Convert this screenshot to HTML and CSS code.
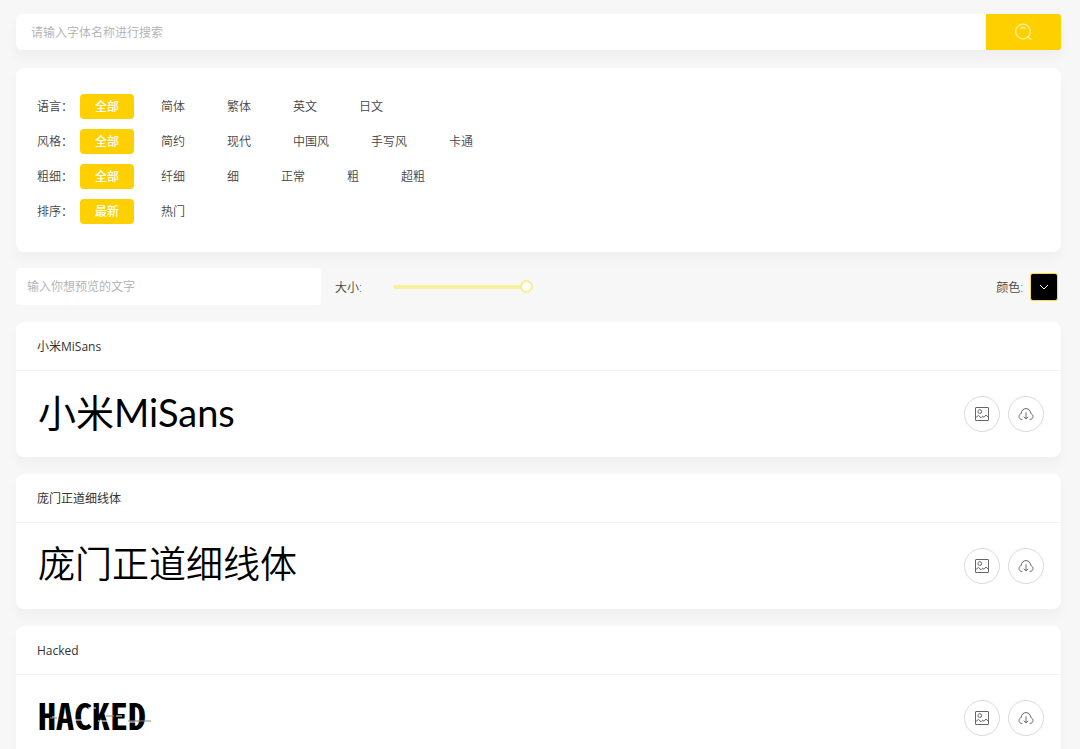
FILE: index.html
```html
<!DOCTYPE html>
<html lang="zh-CN">
<head>
  <meta charset="UTF-8">
  <meta name="viewport" content="width=device-width, initial-scale=1.0">
  <title>字体搜索</title>
  <link rel="stylesheet" href="styles.css">
</head>
<body>

<svg class="icons" aria-hidden="true">
  <symbol id="icon-image" viewBox="0 0 16 16">
    <rect x="1.5" y="1.5" width="13" height="13" rx="0.5"/>
    <circle cx="5.8" cy="5.6" r="1.9"/>
    <path d="M1.8 11.6L4.4 9.4L7 11.8L8.6 10.2L10 11.2L12 9L14.2 11.4"/>
  </symbol>
  <symbol id="icon-download" viewBox="0 0 16 16">
    <path d="M4.4 13.4H3.9C2.2 13.4 1 12.1 1 10.5C1 9.1 1.9 8 3.2 7.6C3.4 4.6 5.3 2.6 8 2.6C10.7 2.6 12.6 4.6 12.8 7.6C14.1 8 15 9.1 15 10.5C15 12.1 13.8 13.4 12.1 13.4H11.6"/>
    <path d="M8 6.4V12.8M5.8 10.8L8 13L10.2 10.8"/>
  </symbol>
</svg>

<form class="search">
  <input type="text" class="search-input" placeholder="请输入字体名称进行搜索" aria-label="搜索字体">
  <button type="button" class="search-btn" aria-label="搜索">
    <svg viewBox="0 0 20 20">
      <circle cx="10" cy="9.5" r="7.3"/>
      <path d="M7.4 6.4C9 5.2 11 5.2 12.6 6.4M14.4 14.4L16.8 16.8H18.4"/>
    </svg>
  </button>
</form>

<div class="filters">
  <div class="filter-row">
    <span class="filter-label">语言：</span>
    <a class="tag active" href="#">全部</a>
    <a class="tag" href="#">简体</a>
    <a class="tag" href="#">繁体</a>
    <a class="tag" href="#">英文</a>
    <a class="tag" href="#">日文</a>
  </div>
  <div class="filter-row">
    <span class="filter-label">风格：</span>
    <a class="tag active" href="#">全部</a>
    <a class="tag" href="#">简约</a>
    <a class="tag" href="#">现代</a>
    <a class="tag" href="#">中国风</a>
    <a class="tag" href="#">手写风</a>
    <a class="tag" href="#">卡通</a>
  </div>
  <div class="filter-row">
    <span class="filter-label">粗细：</span>
    <a class="tag active" href="#">全部</a>
    <a class="tag" href="#">纤细</a>
    <a class="tag" href="#">细</a>
    <a class="tag" href="#">正常</a>
    <a class="tag" href="#">粗</a>
    <a class="tag" href="#">超粗</a>
  </div>
  <div class="filter-row">
    <span class="filter-label">排序：</span>
    <a class="tag active" href="#">最新</a>
    <a class="tag" href="#">热门</a>
  </div>
</div>

<div class="toolbar">
  <input type="text" class="preview-input" placeholder="输入你想预览的文字" aria-label="预览文字">
  <label class="size-label" for="size">大小:</label>
  <input type="range" class="size-range" id="size" min="12" max="60" value="60">
  <label class="color-label" for="color">颜色:</label>
  <button type="button" class="color-btn" id="color">
    <svg viewBox="0 0 12 12"><path d="M2 4L6 8L10 4"/></svg>
  </button>
</div>

<div class="card">
  <div class="card-title">小米MiSans</div>
  <div class="card-body">
    <div class="sample sample-misans">小米MiSans</div>
    <button type="button" class="round-btn" aria-label="图片"><svg><use href="#icon-image"/></svg></button>
    <button type="button" class="round-btn" aria-label="下载"><svg><use href="#icon-download"/></svg></button>
  </div>
</div>

<div class="card">
  <div class="card-title">庞门正道细线体</div>
  <div class="card-body">
    <div class="sample sample-thin">庞门正道细线体</div>
    <button type="button" class="round-btn" aria-label="图片"><svg><use href="#icon-image"/></svg></button>
    <button type="button" class="round-btn" aria-label="下载"><svg><use href="#icon-download"/></svg></button>
  </div>
</div>

<div class="card">
  <div class="card-title">Hacked</div>
  <div class="card-body">
    <div class="sample sample-hacked">
      <span class="glitch">HACKED<svg class="glitch-lines" viewBox="0 0 114 26">
        <path class="cut" d="M14 15H19M36 18H44M50 6H58M60 19H74M78 14H84M88 20H98"/>
        <path class="trace" d="M12 16H19M68 14H76M90 19H113"/>
      </svg></span>
    </div>
    <button type="button" class="round-btn" aria-label="图片"><svg><use href="#icon-image"/></svg></button>
    <button type="button" class="round-btn" aria-label="下载"><svg><use href="#icon-download"/></svg></button>
  </div>
</div>

</body>
</html>
```
FILE: styles.css
```css
* {
  box-sizing: border-box;
}

body {
  margin: 0;
  padding: 14px 19px 0 16px;
  font-family: "Open Sans", "Noto Sans CJK SC", sans-serif;
  font-size: 12px;
  font-weight: 350;
  color: #444;
  background-color: #f7f7f7;
  overflow: hidden;
}

input,
button {
  font-family: inherit;
  font-size: 12px;
  font-weight: inherit;
  border: none;
  outline: none;
}

input::placeholder {
  color: #b0b0b0;
}

svg {
  fill: none;
  stroke: currentColor;
}

.icons {
  display: none;
}

/* Recherche */
.search {
  display: flex;
  height: 36px;
  margin-bottom: 18px;
  border-radius: 6px;
  background-color: #fff;
  box-shadow: 0 8px 12px rgba(40, 60, 60, 0.04);
}

.search-input {
  flex: 1;
  padding: 0 15px;
  background: transparent;
}

.search-btn {
  display: flex;
  align-items: center;
  justify-content: center;
  width: 75px;
  padding: 0 2px 0 0;
  border-radius: 0 3px 3px 0;
  color: #fff3a0;
  background-color: #ffd000;
  cursor: pointer;
}

.search-btn svg {
  width: 20px;
  height: 20px;
  stroke-width: 1.3;
}

/* Filtres */
.filters {
  display: flex;
  flex-direction: column;
  gap: 10px;
  margin-bottom: 16px;
  padding: 26px 21px 28px;
  border-radius: 8px;
  background-color: #fff;
  box-shadow: 0 8px 12px rgba(0, 0, 0, 0.03);
}

.filter-row {
  display: flex;
  gap: 12px;
  line-height: 25px;
}

.filter-label {
  width: 31px;
  white-space: nowrap;
}

.tag {
  padding: 0 15px;
  border-radius: 4px;
  color: #444;
  text-decoration: none;
}

.tag.active {
  color: #fff;
  font-weight: 500;
  background-color: #ffd000;
}

/* Barre d'outils */
.toolbar {
  display: flex;
  align-items: center;
  height: 37px;
  margin-bottom: 17px;
}

.preview-input {
  width: 305px;
  height: 37px;
  padding: 0 11px;
  border-radius: 4px;
  background-color: #fff;
}

.size-label {
  margin-left: 14px;
}

.size-range {
  appearance: none;
  width: 140px;
  height: 14px;
  margin: 0 auto 0 31px;
  background: transparent;
}

.size-range::-webkit-slider-runnable-track {
  height: 4px;
  border-radius: 2px;
  background-color: #f7f19c;
}

.size-range::-webkit-slider-thumb {
  appearance: none;
  width: 13px;
  height: 13px;
  margin-top: -5px;
  border: 2px solid #f5ef8c;
  border-radius: 50%;
  background-color: #fff;
}

.color-btn {
  display: flex;
  align-items: center;
  justify-content: center;
  width: 28px;
  height: 28px;
  margin: 0 3px 0 7px;
  padding: 0;
  border: 1px solid #ffd83c;
  border-radius: 3px;
  color: #fff;
  background-color: #000;
}

.color-btn svg {
  width: 12px;
  height: 12px;
}

/* Cartes des polices */
.card {
  margin-bottom: 17px;
  border-radius: 8px;
  background-color: #fff;
  box-shadow: 0 8px 12px rgba(20, 20, 50, 0.03);
}

.card-title {
  padding: 2px 21px 0;
  line-height: 46px;
  font-weight: 400;
  color: #333;
  border-bottom: 1px solid #f2f2f2;
}

.card-body {
  display: flex;
  align-items: center;
  gap: 8px;
  height: 86px;
  padding: 0 17px 0 22px;
}

.sample {
  flex: 1;
  font-size: 37px;
  line-height: 48px;
  color: #000;
}

.sample-misans {
  padding-bottom: 4px;
  font-family: Lato, "Noto Sans CJK SC", sans-serif;
  font-size: 38px;
  font-weight: 400;
}

.sample-thin {
  padding-bottom: 8px;
  font-family: "Noto Sans CJK SC", sans-serif;
  font-weight: 350;
}

.sample-hacked {
  padding-bottom: 8px;
  font-family: "Noto Sans Mono CJK SC", "DejaVu Sans Mono", monospace;
  font-size: 36px;
  font-weight: bold;
}

.glitch {
  position: relative;
}

/* Traits parasites par-dessus le mot */
.glitch-lines {
  position: absolute;
  left: 0;
  top: 14px;
  width: 114px;
  height: 26px;
}

.glitch-lines .cut {
  stroke: #fff;
}

.glitch-lines .trace {
  stroke: #888;
}

.round-btn {
  display: flex;
  align-items: center;
  justify-content: center;
  width: 36px;
  height: 36px;
  padding: 0;
  border: 1px solid #ddd8dc;
  border-radius: 50%;
  color: #666;
  background-color: #fff;
  cursor: pointer;
}

.round-btn svg {
  width: 16px;
  height: 16px;
}
```
